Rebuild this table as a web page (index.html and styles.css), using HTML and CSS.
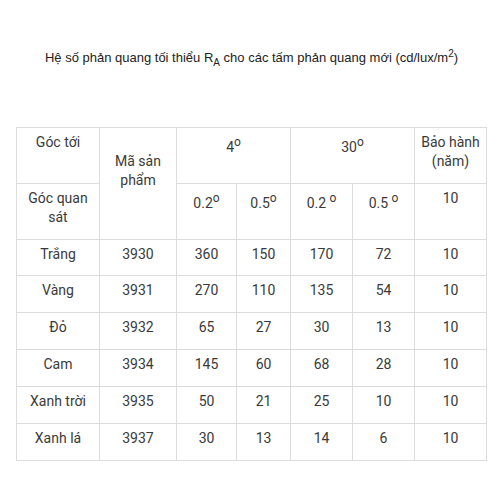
FILE: index.html
```html
<!DOCTYPE html>
<html lang="vi">
<head>
<meta charset="utf-8">
<link rel="stylesheet" href="styles.css">
</head>
<body>
<div class="page">
  <p class="title">Hệ số phản quang tối thiểu R<sub>A</sub> cho các tấm phản quang mới (cd/lux/m<sup>2</sup>)</p>
  <table class="spec">
    <colgroup>
      <col class="c1"><col class="c2"><col class="c3"><col class="c4"><col class="c5"><col class="c6"><col class="c7">
    </colgroup>
    <tbody>
      <tr class="hrow">
        <td>Góc tới</td>
        <td rowspan="2" class="code">Mã sản phẩm</td>
        <td colspan="2">4<sup>o</sup></td>
        <td colspan="2">30<sup>o</sup></td>
        <td>Bảo hành (năm)</td>
      </tr>
      <tr class="hrow">
        <td>Góc quan sát</td>
        <td>0.2<sup>o</sup></td>
        <td>0.5<sup>o</sup></td>
        <td>0.2 <sup>o</sup></td>
        <td>0.5 <sup>o</sup></td>
        <td>10</td>
      </tr>
      <tr class="drow first"><td>Trắng</td><td>3930</td><td>360</td><td>150</td><td>170</td><td>72</td><td>10</td></tr>
      <tr class="drow"><td>Vàng</td><td>3931</td><td>270</td><td>110</td><td>135</td><td>54</td><td>10</td></tr>
      <tr class="drow"><td>Đỏ</td><td>3932</td><td>65</td><td>27</td><td>30</td><td>13</td><td>10</td></tr>
      <tr class="drow"><td>Cam</td><td>3934</td><td>145</td><td>60</td><td>68</td><td>28</td><td>10</td></tr>
      <tr class="drow"><td>Xanh trời</td><td>3935</td><td>50</td><td>21</td><td>25</td><td>10</td><td>10</td></tr>
      <tr class="drow"><td>Xanh lá</td><td>3937</td><td>30</td><td>13</td><td>14</td><td>6</td><td>10</td></tr>
    </tbody>
  </table>
</div>
</body>
</html>
```
FILE: styles.css
```css
html, body {
  margin: 0;
  padding: 0;
  background: #ffffff;
}
.page {
  padding: 48px 16px 0 16px;
}
.title {
  margin: 0 0 59px 0;
  font-family: "Liberation Sans", Arial, sans-serif;
  font-size: 13px;
  line-height: 20px;
  color: #222222;
  text-align: center;
}
.title sub, .title sup {
  font-size: 10px;
  line-height: 0;
}
.spec {
  width: 470px;
  border-collapse: collapse;
  table-layout: fixed;
  font-family: Roboto, "Liberation Sans", sans-serif;
  font-size: 14px;
  color: #3a3a3a;
}
.c1 { width: 83px; }
.c2 { width: 77px; }
.c3 { width: 60px; }
.c4 { width: 54px; }
.c5 { width: 62px; }
.c6 { width: 62px; }
.c7 { width: 72px; }
.spec td {
  border: 1px solid #dcdcdc;
  text-align: center;
  vertical-align: top;
  padding: 5px 4px 0 4px;
  line-height: 19px;
}
.spec sup {
  font-size: 12px;
}
.hrow { height: 56px; }
.drow { height: 37px; }
.drow.first { height: 36px; }
.spec td.code {
  padding-top: 24px;
}
```
